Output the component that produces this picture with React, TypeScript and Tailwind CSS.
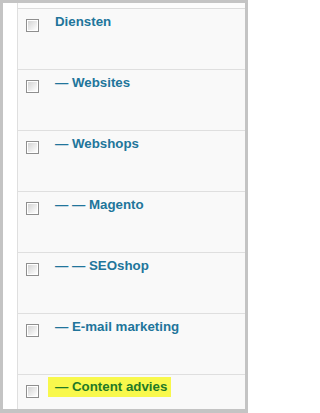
const items = [
    'Diensten',
    '— Websites',
    '— Webshops',
    '— — Magento',
    '— — SEOshop',
    '— E-mail marketing',
]

const Checkbox = () => (
    <span className="mt-[10px] ml-[8px] flex h-[13px] w-[13px] shrink-0 border border-[#8f8f8f] bg-white p-px">
        <span className="h-full w-full bg-gradient-to-br from-[#d4d4d4] to-white" />
    </span>
)

export default function App() {
    return (
        <div
            className="flex h-[413px] w-[248px] bg-[#c4c4c4] pt-[3px] pr-[3px] pb-[4px] pl-[3px]"
            style={{ fontFamily: '"Liberation Sans", Arial, sans-serif' }}
        >
            <div className="flex flex-1 bg-white">
                {/* left gutter */}
                <div className="w-[15px] shrink-0 border-r border-[#dfdfdf]" />

                <div className="flex flex-1 flex-col">
                    <div className="h-[6px] shrink-0 border-b border-[#dcdcdc] bg-[#fcfcfc]" />

                    {items.map((label) => (
                        <div
                            key={label}
                            className="flex h-[61px] shrink-0 items-start border-b border-[#dfdfdf] bg-[#f9f9f9]"
                        >
                            <Checkbox />
                            <span className="ml-[16px] pt-[5px] text-[13.3px] leading-[15px] font-bold text-[#21759b]">
                                {label}
                            </span>
                        </div>
                    ))}

                    {/* last row, highlighted */}
                    <div className="flex flex-1 items-start bg-[#f9f9f9]">
                        <Checkbox />
                        <span className="mt-[2px] ml-[9px] inline-block h-[20px] bg-[#f8f84c] pr-[4px] pl-[7px] text-[13.3px] leading-[20px] font-bold text-[#1f7a26]">
                            — Content advies
                        </span>
                    </div>
                </div>
            </div>
        </div>
    )
}
